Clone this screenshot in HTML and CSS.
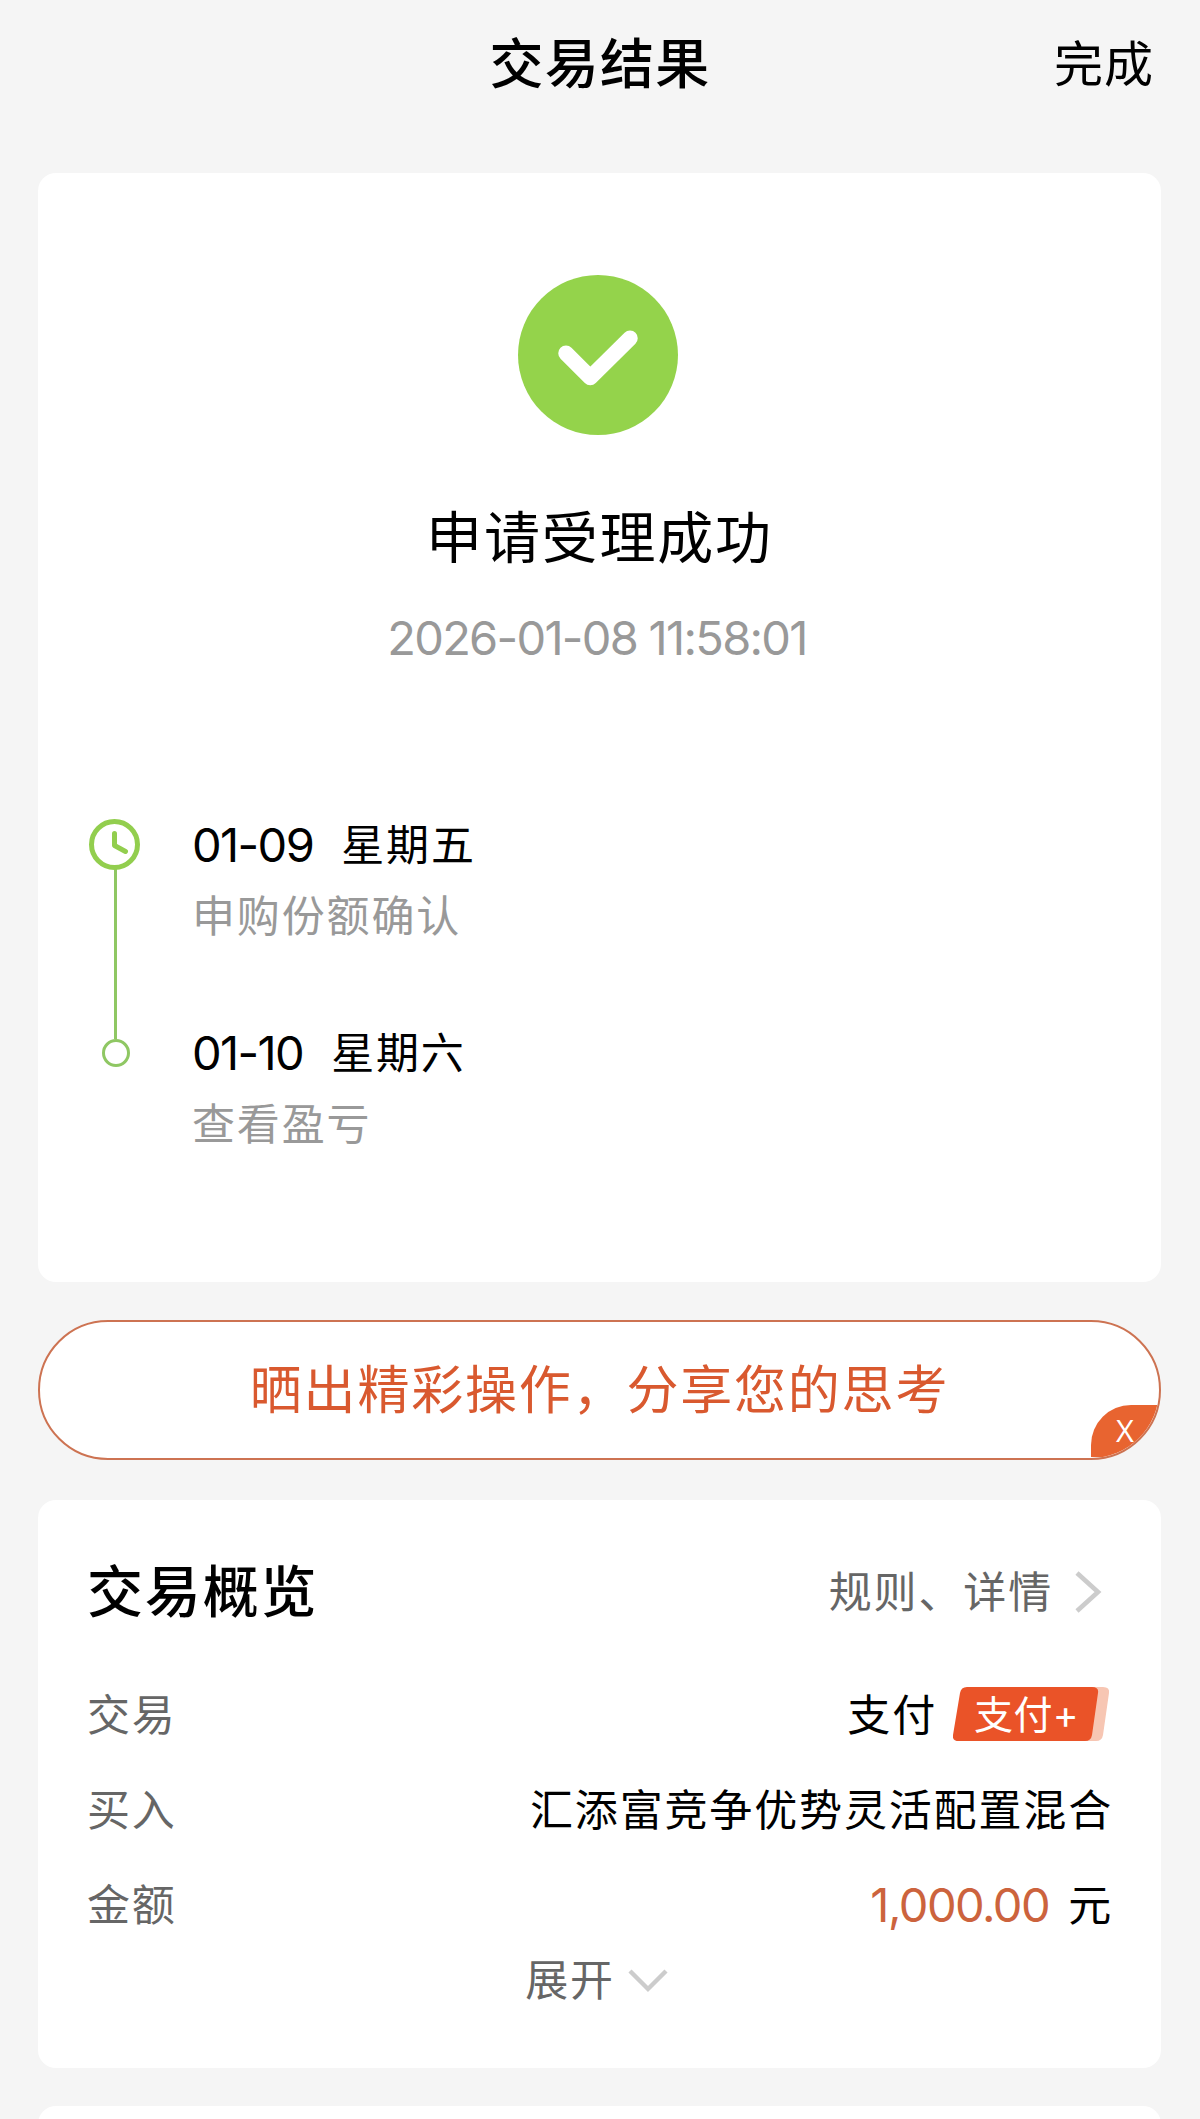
FILE: index.html
```
<!DOCTYPE html>
<html lang="zh-CN">

<head>
  <meta charset="UTF-8">
  <meta name="viewport" content="width=device-width, initial-scale=1.0">
  <title>交易结果</title>
  <link rel="stylesheet" href="styles.css">
</head>

<body>
  <header class="topbar">
    <h1>交易结果</h1>
    <a class="done">完成</a>
  </header>

  <main>
    <section class="card result">
      <svg class="check" width="160" height="160" viewBox="0 0 160 160">
        <circle cx="80" cy="80" r="80" fill="#94d34b" />
        <path d="M48 78.3L72.3 102.5L112 63.3" fill="none" stroke="#fff" stroke-width="15.5" stroke-linecap="round" stroke-linejoin="round" />
      </svg>
      <h2>申请受理成功</h2>
      <p class="time">2026-01-08 11:58:01</p>

      <div class="timeline">
        <svg class="rail" width="52" height="254" viewBox="0 0 52 254" fill="none">
          <path d="M27.5 53V224" stroke="#8fc763" stroke-width="3" />
          <circle cx="26.5" cy="29.5" r="23" stroke="#92ce4e" stroke-width="5" />
          <path d="M26.5 18.5V30.5L37.5 36.5" stroke="#92ce4e" stroke-width="5" stroke-linecap="round" stroke-linejoin="round" />
          <circle cx="28" cy="238" r="12.5" stroke="#8fc763" stroke-width="3" />
        </svg>
        <ul>
          <li>
            <p class="day"><span class="date">01-09</span><span>星期五</span></p>
            <p class="desc">申购份额确认</p>
          </li>
          <li>
            <p class="day"><span class="date">01-10</span><span>星期六</span></p>
            <p class="desc">查看盈亏</p>
          </li>
        </ul>
      </div>
    </section>

    <div class="share">
      <span class="share-text">晒出精彩操作，分享您的思考</span>
      <span class="close">X</span>
    </div>

    <section class="card overview">
      <div class="overview-head">
        <h3>交易概览</h3>
        <a class="rules">规则、详情
          <svg width="28" height="44" viewBox="0 0 28 44" fill="none">
            <path d="M3 3L24 22L3 41" stroke="#ccc" stroke-width="4.6" />
          </svg>
        </a>
      </div>
      <div class="row">
        <span class="label">交易</span>
        <span class="value">支付
          <span class="tag">
            <svg width="158" height="54" viewBox="0 0 158 54">
              <path d="M130 0H150Q157 0 156 6L150 48Q149 54 143 54H130Z" fill="#f7c6b3" />
              <path d="M14 0H139Q146 0 145 6L139 48Q138 54 132 54H6Q-1 54 0 48L7 6Q8 0 14 0Z" fill="#ea5328" />
            </svg>
            <span class="tag-text">支付+</span>
          </span>
        </span>
      </div>
      <div class="row">
        <span class="label">买入</span>
        <span class="value">汇添富竞争优势灵活配置混合</span>
      </div>
      <div class="row">
        <span class="label">金额</span>
        <span class="value"><span class="amount">1,000.00</span>元</span>
      </div>
      <div class="expand">展开
        <svg width="40" height="26" viewBox="0 0 40 26" fill="none">
          <path d="M2 4L20 22L38 4" stroke="#ccc" stroke-width="4.4" />
        </svg>
      </div>
    </section>

    <section class="card next"></section>
  </main>
</body>

</html>
```

FILE: styles.css
```
* {
  margin: 0;
  padding: 0;
  box-sizing: border-box;
}
html {
  overflow: hidden;
}
body {
  width: 1200px;
  height: 2119px;
  overflow: hidden;
  background-color: #f5f5f5;
  color: #000;
  font-family: Inter, "Noto Sans CJK SC", sans-serif;
  font-size: 43px;
  line-height: 60px;
  letter-spacing: 1.85px;
}
.topbar {
  display: grid;
  grid-template-columns: 1fr auto 1fr;
  align-items: center;
  height: 173px;
  padding: 2px 46px 46px;
}
.topbar h1 {
  grid-column: 2;
  font-size: 54px;
  font-weight: 500;
  letter-spacing: 1.2px;
}
.done {
  justify-self: end;
  font-size: 49px;
  letter-spacing: 1px;
}
main {
  display: flex;
  flex-direction: column;
  padding: 0 39px 0 38px;
}
.card {
  background-color: #fff;
  border-radius: 18px;
}

/* result */
.result {
  display: flex;
  flex-direction: column;
  align-items: center;
  height: 1109px;
  padding: 102px 50px 0;
}
.check {
  margin-right: 3px;
}
.result h2 {
  margin-top: 63px;
  font-size: 56px;
  font-weight: 400;
  line-height: 80px;
  letter-spacing: 1.8px;
}
.time {
  margin-top: 30px;
  margin-right: 5px;
  color: #999;
  font-size: 47px;
  letter-spacing: -1.7px;
}
.timeline {
  display: flex;
  align-self: stretch;
  gap: 52px;
  margin-top: 147px;
}
.timeline ul {
  list-style: none;
}
.timeline li {
  height: 208px;
}
.day {
  display: flex;
  gap: 28px;
}
.date {
  font-size: 47px;
  letter-spacing: -1.6px;
}
.desc {
  margin-top: 11px;
  color: #999;
}

/* share */
.share {
  position: relative;
  height: 140px;
  margin: 38px 0 40px;
  overflow: hidden;
  background-color: #fff;
  border: 2px solid #cd7352;
  border-radius: 70px;
  color: #d9592f;
  text-align: center;
}
.share-text {
  font-size: 52px;
  line-height: 137px;
  letter-spacing: 1.8px;
}
.close {
  position: absolute;
  right: 0;
  bottom: 1px;
  width: 68px;
  height: 52px;
  background-color: #e86430;
  border-top-left-radius: 40px;
  color: #fff;
  font-family: "Open Sans", sans-serif;
  font-size: 31px;
  line-height: 51px;
  letter-spacing: 0;
}

/* overview */
.overview {
  height: 568px;
  padding: 51px 50px 0 49px;
}
.overview-head {
  display: flex;
  align-items: center;
  justify-content: space-between;
  height: 82px;
  margin-bottom: 34px;
  padding-right: 9px;
}
.overview-head h3 {
  font-size: 56px;
  font-weight: 500;
}
.rules {
  display: flex;
  align-items: center;
  gap: 21px;
  color: #666;
}
.row {
  display: flex;
  align-items: center;
  justify-content: space-between;
  height: 95px;
}
.label {
  color: #666;
}
.value {
  display: flex;
  align-items: center;
  margin-right: -2px;
}
.tag {
  position: relative;
  height: 54px;
  margin: 0 2px 2px 16px;
}
.tag svg {
  display: block;
}
.tag-text {
  position: absolute;
  top: 0;
  left: 21px;
  color: #fff;
  font-size: 39px;
  line-height: 56px;
  letter-spacing: 0.4px;
}
.amount {
  margin-right: 19px;
  color: #cc633d;
  font-size: 47px;
  letter-spacing: -1.5px;
}
.expand {
  display: flex;
  align-items: center;
  justify-content: center;
  gap: 13px;
  height: 56px;
  padding-right: 5px;
  color: #666;
}
.next {
  height: 60px;
  margin-top: 38px;
}
```
